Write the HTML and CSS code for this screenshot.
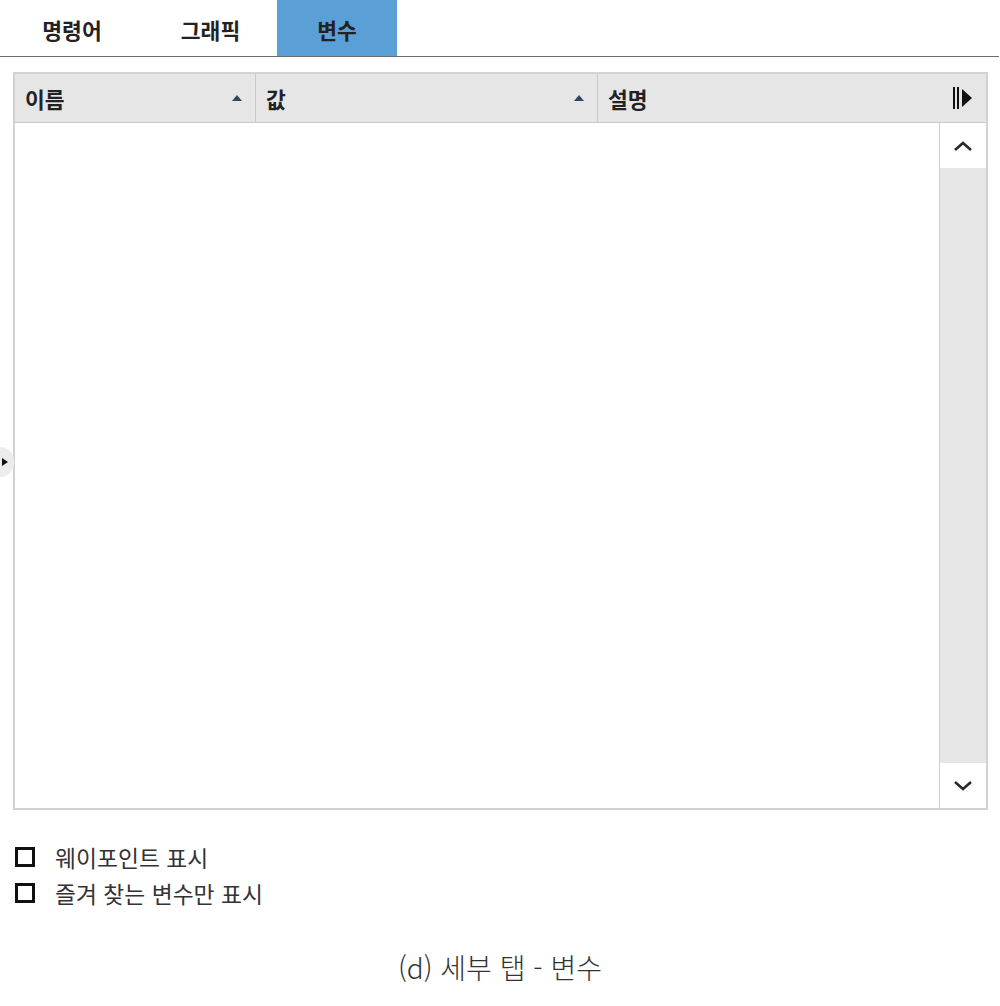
FILE: index.html
```html
<!DOCTYPE html>
<html lang="ko">
<head>
<meta charset="utf-8">
<link rel="stylesheet" href="styles.css">
</head>
<body>
<div class="page">
  <div class="tabs">
    <div class="tab t1">명령어</div>
    <div class="tab t2">그래픽</div>
    <div class="tab t3 active">변수</div>
  </div>

  <div class="grid">
    <div class="head">
      <div class="col c1"><span>이름</span><svg class="sort" width="10" height="6" viewBox="0 0 10 6"><path d="M0 6 L5 0 L10 6 Z" fill="#2e4a66"/></svg></div>
      <div class="col c2"><span>값</span><svg class="sort" width="10" height="6" viewBox="0 0 10 6"><path d="M0 6 L5 0 L10 6 Z" fill="#2e4a66"/></svg></div>
      <div class="col c3"><span>설명</span><svg class="colicon" width="22" height="24" viewBox="0 0 22 24"><rect x="1" y="1" width="2" height="22" fill="#111"/><rect x="5" y="1" width="2" height="22" fill="#111"/><path d="M10 3 L20 12 L10 21 Z" fill="#111"/></svg></div>
    </div>
    <div class="body">
      <div class="rows"></div>
      <div class="scroll">
        <div class="sbtn"><svg width="20" height="12" viewBox="0 0 20 12"><path d="M2 10 L10 3 L18 10" fill="none" stroke="#2a2a2a" stroke-width="2.6"/></svg></div>
        <div class="track"></div>
        <div class="sbtn"><svg width="20" height="12" viewBox="0 0 20 12"><path d="M2 2 L10 9 L18 2" fill="none" stroke="#2a2a2a" stroke-width="2.6"/></svg></div>
      </div>
    </div>
  </div>

  <div class="handle"><svg width="6" height="8" viewBox="0 0 6 8"><path d="M0 0 L6 4 L0 8 Z" fill="#111"/></svg></div>

  <div class="options">
    <label class="opt"><span class="box"></span><span>웨이포인트 표시</span></label>
    <label class="opt"><span class="box"></span><span>즐겨 찾는 변수만 표시</span></label>
  </div>

  <div class="caption">(d) 세부 탭 - 변수</div>
</div>
</body>
</html>
```

FILE: styles.css
```css
* { box-sizing: border-box; }
html, body { margin: 0; padding: 0; background: #fff; }
body {
  font-family: "Noto Sans CJK KR", "Noto Sans", sans-serif;
  color: #222;
}
.page {
  position: relative;
  width: 1000px;
  height: 1006px;
}
.tabs {
  display: flex;
  width: 999px;
  height: 57px;
  border-bottom: 1px solid #6a6a6a;
}
.tab {
  display: flex;
  align-items: center;
  justify-content: center;
  font-size: 21.5px;
  font-weight: 700;
  color: #222;
  padding-top: 2px;
}
.t1 { width: 144px; }
.t2 { width: 133px; }
.t3 { width: 120px; }
.tab.active { background: #5a9fd6; }

.grid {
  margin: 15px 0 0 13px;
  width: 975px;
  height: 738px;
  border: 2px solid #d2d2d2;
  display: flex;
  flex-direction: column;
}
.head {
  display: flex;
  height: 49px;
  background: #e6e6e6;
  border-bottom: 1px solid #c9c9c9;
}
.col {
  display: flex;
  align-items: center;
  justify-content: space-between;
  padding: 0 10px 0 10px;
  font-size: 21.5px;
  font-weight: 700;
  color: #222;
}
.col span { padding-top: 1px; }
.c1 { width: 241px; border-right: 1px solid #c9c9c9; }
.c2 { width: 342px; border-right: 1px solid #c9c9c9; }
.c3 { flex: 1; padding-right: 12px; }
.sort { margin-right: 3px; }
.body {
  flex: 1;
  display: flex;
}
.rows { flex: 1; background: #fff; }
.scroll {
  width: 47px;
  border-left: 1px solid #cfcfcf;
  display: flex;
  flex-direction: column;
}
.sbtn {
  height: 45px;
  display: flex;
  align-items: center;
  justify-content: center;
  background: #fff;
}
.track { flex: 1; background: #e6e6e6; }

.handle {
  position: absolute;
  left: 0;
  top: 447px;
  width: 14px;
  height: 30px;
  background: #ececec;
  border-radius: 0 15px 15px 0;
  display: flex;
  align-items: center;
  padding-left: 2px;
}

.options {
  margin: 37px 0 0 15px;
  display: flex;
  flex-direction: column;
  gap: 16px;
}
.opt {
  display: flex;
  align-items: center;
  height: 20px;
  font-size: 22.8px;
  color: #333;
}
.box {
  width: 20px;
  height: 20px;
  border: 3px solid #111;
  margin-right: 20px;
  flex: none;
}
.caption {
  margin-top: 44px;
  text-align: center;
  font-size: 28px;
  font-weight: 300;
  color: #333;
}
```
